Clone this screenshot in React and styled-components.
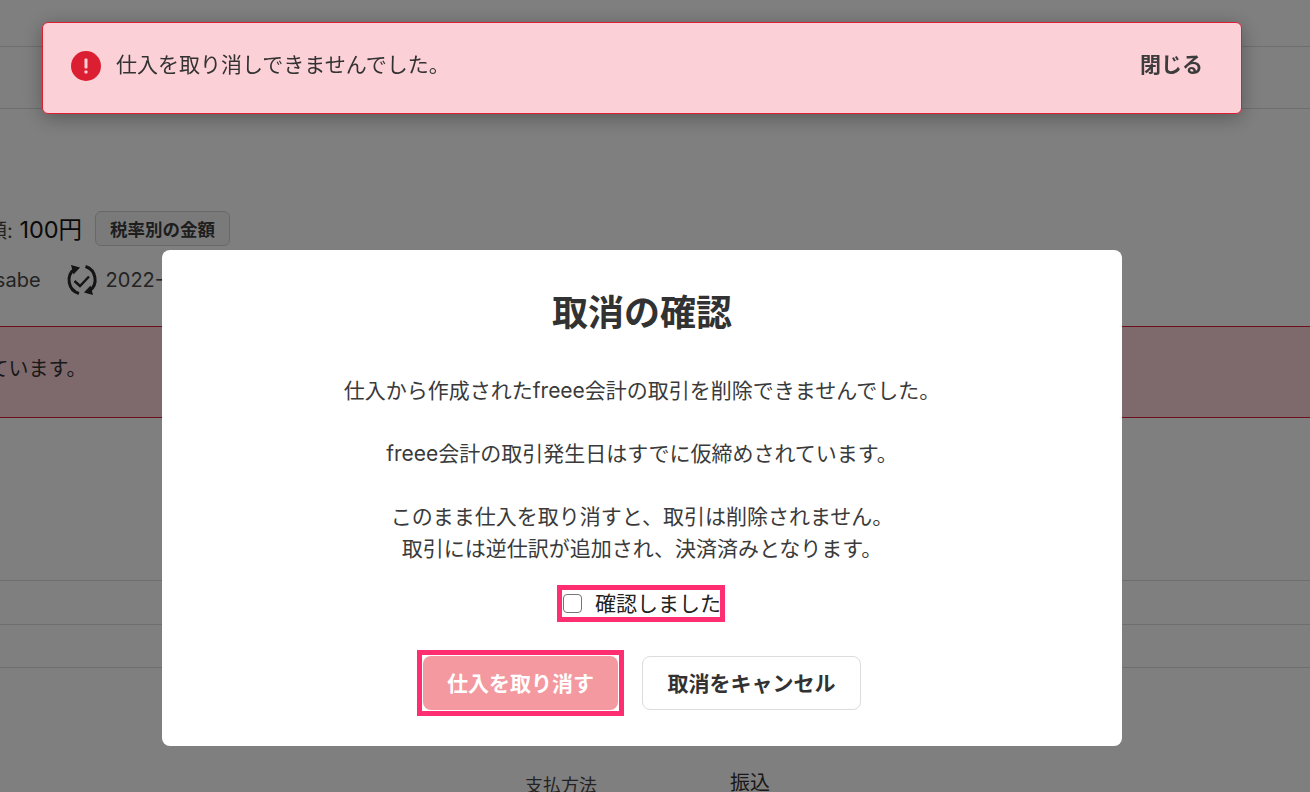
import React from "react";
import styled, { createGlobalStyle } from "styled-components";

const Global = createGlobalStyle`
  html, body { margin: 0; padding: 0; height: 100%; overflow: hidden; background: #fff; }
  body { font-family: Inter, "Noto Sans CJK JP", "Noto Sans", sans-serif; color: #323232; }
`;

const Page = styled.div`
  width: 1310px; height: 792px; overflow: hidden; background: #fff; display: flex; flex-direction: column;
`;
const Bar = styled.div`
  height: ${p => p.$h}px; flex: none; box-sizing: border-box; border-bottom: 1px solid #dcdcdc;
`;
const Spacer = styled.div` height: ${p => p.$h}px; flex: none; `;
const AmountRow = styled.div`
  height: 36px; flex: none; display: flex; align-items: center; margin-left: -13px; gap: 13px; margin-top: -1px;
`;
const Amount = styled.div`
  font-size: 23.5px; color: #141414; white-space: nowrap;
  b { font-weight: 400; font-size: 20px; color: #464646; }
`;
const Tag = styled.div`
  width: 135px; height: 35px; box-sizing: border-box; border: 1px solid #d0d0d0; border-radius: 6px;
  background: #f4f4f4; display: flex; align-items: center; justify-content: center;
  font-size: 17.5px; font-weight: 700; color: #3c3c3c; white-space: nowrap;
`;
const MetaRow = styled.div`
  height: 34px; flex: none; display: flex; align-items: center; margin-left: -23px; font-size: 20px; color: #464646; margin-top: 17px;
  svg { margin-left: 25px; margin-right: 8px; }
`;
const Banner = styled.div`
  height: 92px; flex: none; box-sizing: border-box; border-top: 1px solid #dc1e32; border-bottom: 1px solid #dc1e32;
  background: #fdd4d9; display: flex; align-items: center; margin-left: -271px; font-size: 20px; color: #323232; white-space: nowrap; padding-bottom: 10px;
`;
const PayRow = styled.div`
  display: flex; align-items: center; margin-left: 525px; gap: 133px; margin-top: 97px; white-space: nowrap;
  span:first-child { font-size: 18px; color: #464646; padding-top: 6px; }
  span:last-child { font-size: 20px; color: #323232; }
`;

const Overlay = styled.div`
  position: fixed; inset: 0; background: rgba(0,0,0,.5); display: flex; justify-content: center; align-items: flex-start;
  padding: 250px 26px 0 0;
`;
const Modal = styled.div`
  width: 960px; height: 496px; box-sizing: border-box; background: #fff; border-radius: 8px; padding-top: 36px;
  display: flex; flex-direction: column; align-items: center;
`;
const Title = styled.h2`
  margin: 0; font-size: 36px; line-height: 54px; font-weight: 700; color: #323232;
`;
const Body = styled.p`
  margin: 35px 0 0; font-size: 21px; line-height: 31.5px; text-align: center; color: #3a3a3a;
`;
const CheckHighlight = styled.label`
  margin: 21px 2px 0 0; box-sizing: border-box; width: 168px; height: 37px; border: 5px solid #ff2e70; background: #fff;
  display: flex; align-items: center; font-size: 21px; color: #222; white-space: nowrap; line-height: 1;
`;
const Check = styled.input`
  appearance: none; margin: 0 13px 0 1px; width: 19px; height: 19px; box-sizing: border-box; flex: none;
  border: 1.5px solid #767676; border-radius: 4px; background: #fff;
`;
const Actions = styled.div`
  display: flex; align-items: center; gap: 18px; margin: 28px 6px 0 0;
`;
const DangerHighlight = styled.div`
  width: 207px; height: 66px; box-sizing: border-box; border: 5px solid #ff2e70; padding: 1px; background: #fff;
`;
const DangerButton = styled.button`
  width: 100%; height: 100%; border: 0; border-radius: 8px; background: #f3999f; color: #fff; padding: 0 0 3px;
  font: 700 21px Inter, "Noto Sans CJK JP", sans-serif; cursor: not-allowed;
`;
const CancelButton = styled.button`
  width: 219px; height: 54px; box-sizing: border-box; border: 1px solid #dcdcdc; border-radius: 8px; background: #fff; color: #323232; padding: 0 0 3px;
  font: 700 21px Inter, "Noto Sans CJK JP", sans-serif;
`;

const Toast = styled.div`
  position: fixed; top: 22px; left: 42px; width: 1200px; height: 92px; box-sizing: border-box;
  background: #fbd0d7; border: 1px solid #dc1e32; border-radius: 6px; box-shadow: 0 4px 20px rgba(0,0,0,.3);
  display: flex; align-items: center; padding: 0 38px 4px 28px;
`;
const ToastText = styled.div`
  flex: 1; margin-left: 15px; padding-bottom: 6px; font-size: 21px; color: #323232; white-space: nowrap;
`;
const CloseButton = styled.button`
  border: 0; background: none; padding: 0 0 6px; color: #3c3c3c; font: 700 21px Inter, "Noto Sans CJK JP", sans-serif;
`;

const AlertIcon = () => (
  <svg width="30" height="30" viewBox="0 0 30 30" style={{ flex: "none" }}>
    <circle cx="15" cy="15" r="15" fill="#dc1e32" />
    <rect x="13.5" y="7.5" width="3" height="10" rx="1" fill="#fbd0d7" />
    <rect x="13.5" y="19.5" width="3" height="3" rx=".8" fill="#fbd0d7" />
  </svg>
);

const SyncCheckIcon = () => (
  <svg width="32" height="32" viewBox="0 0 32 32" fill="none" stroke="#282828" strokeWidth="3">
    <path d="M8.5 5A14 14 0 0 0 13 29.5" />
    <path d="M23.5 27A14 14 0 0 0 19.5 2.5" />
    <path d="M5 1 L14 3.5 L7.5 10.5 Z" fill="#282828" stroke="none" />
    <path d="M27 31 L18 28.5 L24.5 21.5 Z" fill="#282828" stroke="none" />
    <path d="M8.5 17 L14 22 L23 12.5" strokeWidth="2.4" />
  </svg>
);

export default function App() {
  return (
    <>
      <Global />
      <Page>
        <Bar $h={47} />
        <Bar $h={62} />
        <Spacer $h={102} />
        <AmountRow>
          <Amount><b>額:</b> 100円</Amount>
          <Tag>税率別の金額</Tag>
        </AmountRow>
        <MetaRow>
          <span>tasabe</span>
          <SyncCheckIcon />
          <span>2022-01-01</span>
        </MetaRow>
        <Spacer $h={29} />
        <Banner>この取引は、すでに処理されています。</Banner>
        <Spacer $h={162} />
        <Bar $h={1} />
        <Bar $h={44} />
        <Bar $h={43} />
        <PayRow>
          <span>支払方法</span>
          <span>振込</span>
        </PayRow>
      </Page>
      <Overlay>
        <Modal>
          <Title>取消の確認</Title>
          <Body>
            仕入から作成されたfreee会計の取引を削除できませんでした。<br /><br />
            freee会計の取引発生日はすでに仮締めされています。<br /><br />
            このまま仕入を取り消すと、取引は削除されません。<br />
            取引には逆仕訳が追加され、決済済みとなります。
          </Body>
          <CheckHighlight>
            <Check type="checkbox" />
            確認しました
          </CheckHighlight>
          <Actions>
            <DangerHighlight><DangerButton disabled>仕入を取り消す</DangerButton></DangerHighlight>
            <CancelButton>取消をキャンセル</CancelButton>
          </Actions>
        </Modal>
      </Overlay>
      <Toast>
        <AlertIcon />
        <ToastText>仕入を取り消しできませんでした。</ToastText>
        <CloseButton>閉じる</CloseButton>
      </Toast>
    </>
  );
}
